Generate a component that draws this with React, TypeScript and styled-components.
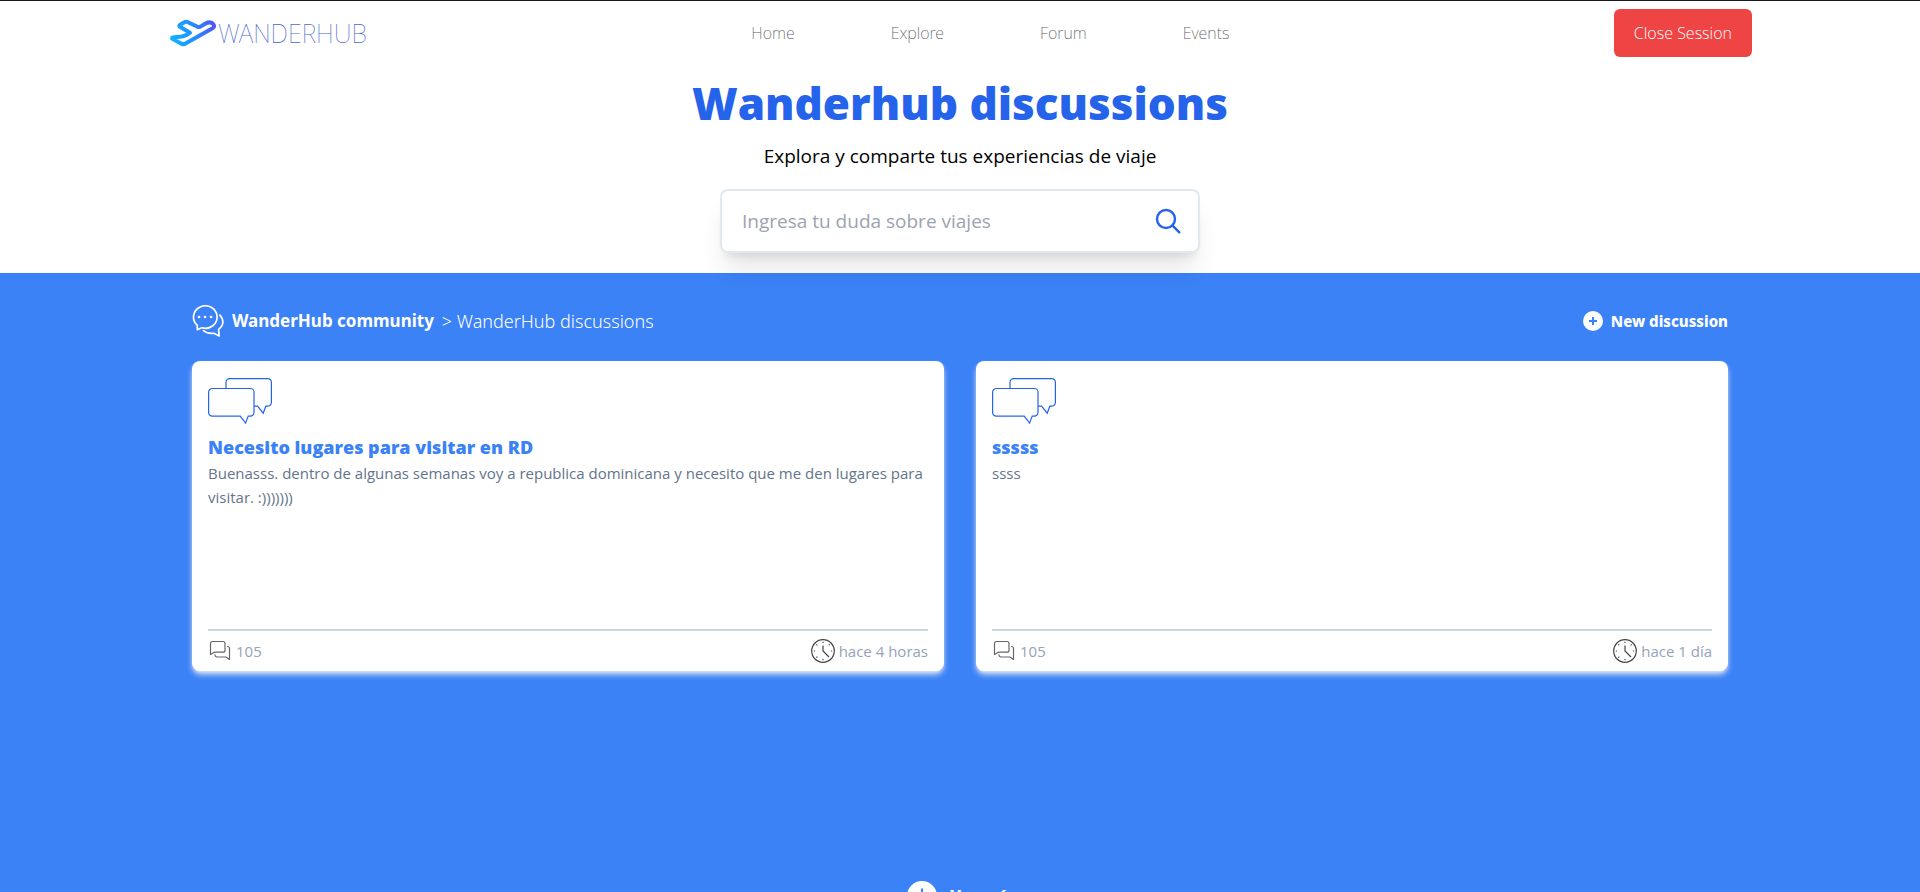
import React from "react";
import styled, { createGlobalStyle } from "styled-components";

const GlobalStyle = createGlobalStyle`
  *, *::before, *::after { box-sizing: border-box; }
  html { scrollbar-width: none; }
  body {
    margin: 0;
    background: #fff;
    color: #000;
    font-family: "Noto Sans", "Open Sans", sans-serif;
    font-size: 15px;
    line-height: 24px;
  }
  button, input { font: inherit; }
  h1, h2, p { margin: 0; }
  svg { display: block; flex: none; }
`;

const textFont = `"Open Sans", "Noto Sans", sans-serif`;

const Header = styled.header`
  display: flex;
  align-items: center;
  justify-content: space-between;
  padding: 8px calc(50% - 792px);
  border-top: 1px solid #18181b;

  @media (max-width: 1640px) {
    padding: 8px 24px;
  }
`;

const Logo = styled.a`
  display: flex;
  align-items: center;
  color: #4a68cc;
  font-size: 25px;
  font-weight: 100;
  line-height: 32px;
  text-decoration: none;
`;

const Nav = styled.nav`
  display: flex;
  flex-wrap: wrap;
  gap: 8px 96px;
`;

const NavLink = styled.a`
  color: #606060;
  font-size: 16px;
  font-weight: 200;
  text-decoration: none;
`;

const CloseButton = styled.button`
  padding: 12px 20px;
  border: 0;
  border-radius: 6px;
  background: #ef4444;
  color: #fff;
  font-family: ${textFont};
  font-size: 16px;
  font-weight: 300;
  cursor: pointer;
`;

const Hero = styled.section`
  display: flex;
  flex-direction: column;
  align-items: center;
  gap: 15px;
  padding: 14px 16px 20px;
  font-family: ${textFont};
`;

const HeroTitle = styled.h1`
  color: #2563eb;
  font-size: 44px;
  font-weight: 800;
  line-height: 48px;
`;

const HeroText = styled.p`
  font-size: 19px;
  line-height: 28px;
`;

const SearchForm = styled.form`
  position: relative;
  z-index: 1;
  display: flex;
  align-items: center;
  width: 100%;
  max-width: 480px;
  height: 64px;
  margin-top: 4px;
  border: 2px solid #e2e8f0;
  border-radius: 8px;
  background: #fff;
  box-shadow: 0 20px 25px -5px rgba(0, 0, 0, 0.1), 0 8px 10px -6px rgba(0, 0, 0, 0.1);
`;

const SearchInput = styled.input`
  flex: 1;
  min-width: 0;
  padding: 0 20px;
  border: 0;
  outline: 0;
  background: transparent;
  font-size: 19px;

  &::placeholder {
    color: #9ca3af;
    opacity: 1;
  }
`;

const SearchButton = styled.button`
  padding: 0 16px;
  border: 0;
  background: none;
  color: #2563eb;
  cursor: pointer;
`;

const Community = styled.main`
  display: flex;
  flex-direction: column;
  gap: 24px;
  padding: 32px 10%;
  background: #3b82f6;
  color: #fff;
`;

const Toolbar = styled.div`
  display: flex;
  align-items: center;
  justify-content: space-between;
`;

const Breadcrumb = styled.nav`
  display: flex;
  align-items: center;
  gap: 8px;
  font-size: 18px;
  font-weight: 300;
`;

const CrumbLink = styled.a`
  color: #fff;
  font-size: 17px;
  font-weight: 700;
  text-decoration: none;
`;

const ActionButton = styled.button<{ $large?: boolean }>`
  display: flex;
  align-items: center;
  gap: ${(p) => (p.$large ? 10 : 6)}px;
  padding: 0;
  border: 0;
  background: none;
  color: #fff;
  font-size: ${(p) => (p.$large ? 16 : 15)}px;
  font-weight: 800;
  cursor: pointer;
`;

const Cards = styled.div`
  display: grid;
  grid-template-columns: repeat(auto-fit, minmax(360px, 1fr));
  gap: 32px;
`;

const Card = styled.article`
  display: flex;
  flex-direction: column;
  padding: 8px 16px;
  border-radius: 8px;
  background: #fff;
  box-shadow: 0 4px 6px -1px #e2e8f0, 0 2px 4px -2px #e2e8f0;
  font-family: ${textFont};
`;

const CardTitle = styled.h2`
  color: #3b82f6;
  font-size: 18px;
  font-weight: 800;
  line-height: 28px;
`;

const CardText = styled.p`
  flex: 1;
  min-height: 168px;
  color: #64748b;
`;

const CardFooter = styled.footer`
  display: flex;
  justify-content: space-between;
  padding-top: 8px;
  border-top: 2px solid #cbd5e1;
  color: #94a3b8;
`;

const Meta = styled.span`
  display: flex;
  align-items: center;
  gap: 4px;
`;

const More = styled.div`
  display: flex;
  justify-content: center;
  padding: 183px 0 32px;
`;

const PlaneIcon = () => (
  <svg width="50" height="32" viewBox="0 0 50 32" fill="none" aria-hidden="true">
    <defs>
      <linearGradient id="plane" x1="2" y1="24" x2="48" y2="8" gradientUnits="userSpaceOnUse">
        <stop offset="0" stopColor="#0fb4ff" />
        <stop offset="0.5" stopColor="#2290ff" />
        <stop offset="1" stopColor="#5153fb" />
      </linearGradient>
    </defs>
    <path
      d="M4.5 20.5 L14 19.5 Q19 18.5 22 15.8 L11.5 9.5 Q10.8 8.6 12 7.8 L16.5 5.2 Q18 4.4 20 5.2 L29.5 9.8 Q31 10.4 32.5 9.6 L37.5 6.5 Q42 4.2 44.8 6.6 Q47.5 9.2 44.6 11.2 L17.5 26.6 Q15 27.8 12.5 26.2 L4.4 21.8 Q3.6 21 4.5 20.5Z"
      stroke="url(#plane)"
      strokeWidth="4"
      strokeLinejoin="round"
    />
  </svg>
);

const SearchIcon = () => (
  <svg width="28" height="28" viewBox="0 0 28 28" fill="none" stroke="currentColor" strokeWidth="2.4" strokeLinecap="round" aria-hidden="true">
    <circle cx="12" cy="12" r="9" />
    <path d="M18.6 18.6 25.3 25.3" />
  </svg>
);

const ChatIcon = () => (
  <svg width="32" height="32" viewBox="0 0 32 32" fill="none" stroke="currentColor" strokeWidth="1.7" strokeLinejoin="round" strokeLinecap="round" aria-hidden="true">
    <path d="M5.2 20.2A11.8 11.2 0 1 1 10 22.800L5.300 24.600Z" />
    <path d="M27.800 10.200c4.200 4.200 4.200 10.200-.8 13.800l-.4 1 .5 6-5.200-2.700c-4.400.5-8-.6-10.400-2.700" />
    <path d="M7 12h.1M13 12h.1M19 12h.1" strokeWidth="2.600" />
  </svg>
);

const PlusIcon = ({ size, reach }: { size: number; reach: number }) => (
  <svg width={size} height={size} viewBox="0 0 24 24" aria-hidden="true">
    <circle cx="12" cy="12" r="10" fill="#fff" />
    <path d={`M12 ${12 - reach}v${reach * 2}M${12 - reach} 12h${reach * 2}`} stroke="#3b82f6" strokeWidth={size > 24 ? 1.4 : 2} />
  </svg>
);

const BubblesIcon = () => (
  <svg width="64" height="64" viewBox="0 0 64 64" fill="none" stroke="#2563eb" strokeWidth="1.2" aria-hidden="true">
    <path d="M18 19V13.200a3.600 3.600 0 0 1 3.600-3.600h38.200a3.600 3.600 0 0 1 3.600 3.600v20.400a3.600 3.600 0 0 1-3.600 3.600h-2l-2.600 7-5.600-7H46" />
    <path d="M4.200 19.500h38.200a3.600 3.600 0 0 1 3.600 3.600v20.400a3.600 3.600 0 0 1-3.600 3.600h-2.200l-2.600 7-5.400-7h-28a3.600 3.600 0 0 1-3.600-3.600V23.100a3.600 3.600 0 0 1 3.600-3.600z" />
  </svg>
);

const RepliesIcon = () => (
  <svg width="24" height="24" viewBox="0 0 24 24" fill="none" stroke="#666" strokeWidth="1.2" strokeLinejoin="round" aria-hidden="true">
    <path d="M2.500 15.500V4.500a2 2 0 0 1 2-2H15a2 2 0 0 1 2 2v6.700a2 2 0 0 1-2 2H6.500z" />
    <path d="M19 7.500h.5a2 2 0 0 1 2 2V20.500l-3.700-2.500H9a2 2 0 0 1-2-2V15.500" />
  </svg>
);

const ClockIcon = () => (
  <svg width="24" height="24" viewBox="0 0 24 24" fill="none" stroke="#444" strokeWidth="1.2" aria-hidden="true">
    <circle cx="12" cy="12" r="11.300" />
    <path d="M12 6.500V12l6 6" />
    <path d="M12 2.800v1.200M12 20v1.200M2.800 12h1.200M20 12h1.200M5.400 5.400l.9.900M18.600 5.400l-.9.900M5.400 18.600l.9-.9" />
  </svg>
);

const discussions = [
  {
    title: "Necesito lugares para visitar en RD",
    text: "Buenasss. dentro de algunas semanas voy a republica dominicana y necesito que me den lugares para visitar. :)))))))",
    replies: 105,
    age: "hace 4 horas",
  },
  { title: "sssss", text: "ssss", replies: 105, age: "hace 1 día" },
];

export default function App() {
  return (
    <>
      <GlobalStyle />
      <Header>
        <Logo href="#">
          <PlaneIcon />
          WANDERHUB
        </Logo>
        <Nav aria-label="Main">
          {["Home", "Explore", "Forum", "Events"].map((label) => (
            <NavLink key={label} href={`#${label.toLowerCase()}`}>
              {label}
            </NavLink>
          ))}
        </Nav>
        <CloseButton type="button">Close Session</CloseButton>
      </Header>
      <Hero>
        <HeroTitle>Wanderhub discussions</HeroTitle>
        <HeroText>Explora y comparte tus experiencias de viaje</HeroText>
        <SearchForm role="search" onSubmit={(e) => e.preventDefault()}>
          <SearchInput type="text" aria-label="Ingresa tu duda sobre viajes" placeholder="Ingresa tu duda sobre viajes" />
          <SearchButton type="submit" aria-label="Buscar">
            <SearchIcon />
          </SearchButton>
        </SearchForm>
      </Hero>
      <Community>
        <Toolbar>
          <Breadcrumb aria-label="Breadcrumb">
            <ChatIcon />
            <CrumbLink href="#community">WanderHub community</CrumbLink>
            <span>&gt; WanderHub discussions</span>
          </Breadcrumb>
          <ActionButton type="button">
            <PlusIcon size={24} reach={4} />
            New discussion
          </ActionButton>
        </Toolbar>
        <Cards>
          {discussions.map((d) => (
            <Card key={d.title}>
              <BubblesIcon />
              <CardTitle>{d.title}</CardTitle>
              <CardText>{d.text}</CardText>
              <CardFooter>
                <Meta>
                  <RepliesIcon />
                  {d.replies}
                </Meta>
                <Meta>
                  <ClockIcon />
                  {d.age}
                </Meta>
              </CardFooter>
            </Card>
          ))}
        </Cards>
        <More>
          <ActionButton type="button" $large>
            <PlusIcon size={36} reach={5} />
            Ver más
          </ActionButton>
        </More>
      </Community>
    </>
  );
}
